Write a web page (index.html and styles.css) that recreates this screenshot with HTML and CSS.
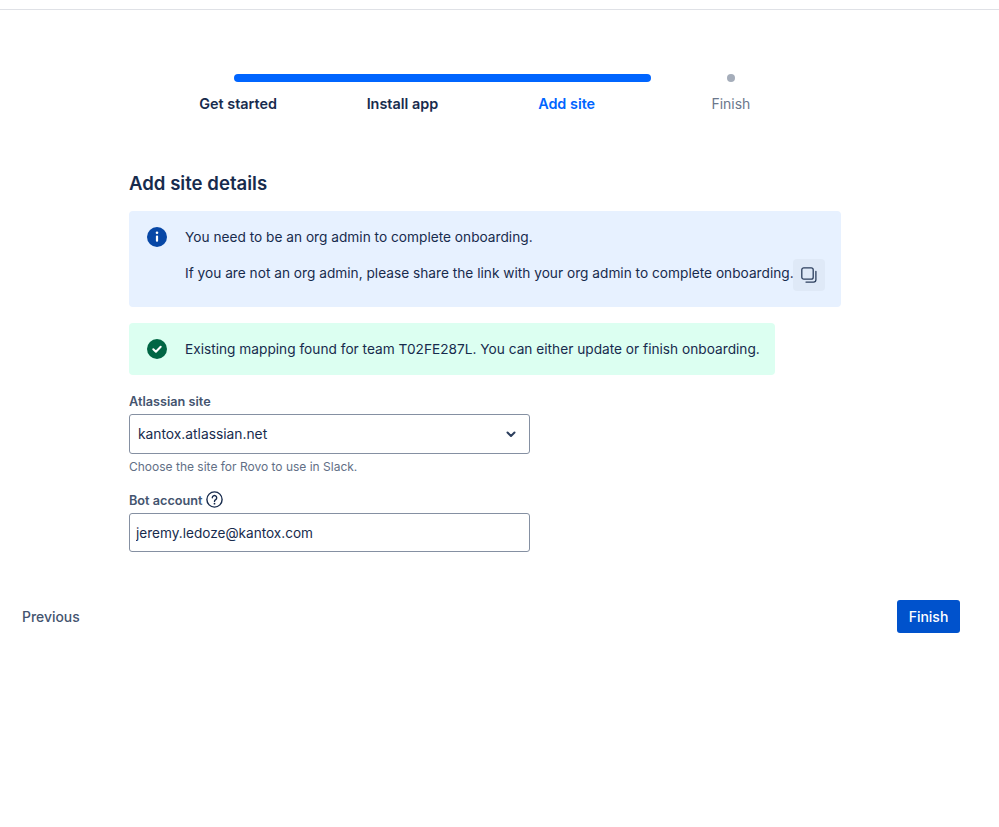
FILE: index.html
```html
<!DOCTYPE html>
<html lang="en">
<head>
    <meta charset="UTF-8">
    <meta name="viewport" content="width=device-width, initial-scale=1.0">
    <title>Add site details</title>
    <link rel="stylesheet" href="styles.css">
</head>
<body>
    <div class="top-line"></div>

    <div class="stepper">
        <div class="track">
            <div class="track-fill"></div>
            <div class="track-dot"></div>
        </div>
        <div class="steps">
            <div class="step step-done">Get started</div>
            <div class="step step-done">Install app</div>
            <div class="step step-current">Add site</div>
            <div class="step step-next">Finish</div>
        </div>
    </div>

    <div class="content">
        <h1 class="title">Add site details</h1>

        <div class="alert alert-info">
            <svg class="alert-icon" width="20" height="20" viewBox="0 0 20 20">
                <circle cx="10" cy="10" r="10" fill="#0747a6"/>
                <circle cx="10" cy="5.8" r="1.3" fill="#fff"/>
                <rect x="8.9" y="8.4" width="2.2" height="6.4" rx="1" fill="#fff"/>
            </svg>
            <div class="alert-body">
                <p class="alert-line">You need to be an org admin to complete onboarding.</p>
                <div class="alert-share">
                    <p class="alert-line share-text">If you are not an org admin, please share the link with your org admin to complete onboarding.</p>
                    <button class="copy-button" aria-label="Copy link">
                        <svg width="16" height="16" viewBox="0 0 16 16" fill="none" stroke="#2c3e5d" stroke-width="1.3">
                            <rect x="0.8" y="0.8" width="11.4" height="11.4" rx="2"/>
                            <path d="M14.9 4.5v8.2a2.4 2.4 0 0 1-2.4 2.4H5" stroke-linecap="round"/>
                        </svg>
                    </button>
                </div>
            </div>
        </div>

        <div class="alert alert-success">
            <svg class="alert-icon" width="20" height="20" viewBox="0 0 20 20">
                <circle cx="10" cy="10" r="10" fill="#006644"/>
                <path d="M6.3 10.2l2.6 2.5 4.8-5" fill="none" stroke="#fff" stroke-width="2" stroke-linecap="round" stroke-linejoin="round"/>
            </svg>
            <div class="alert-body">
                <p class="alert-line">Existing mapping found for team T02FE287L. You can either update or finish onboarding.</p>
            </div>
        </div>

        <div class="field field-site">
            <label class="label">Atlassian site</label>
            <div class="select-box">
                <span>kantox.atlassian.net</span>
                <svg width="10" height="7" viewBox="0 0 10 7" fill="none" stroke="#2c3e5d" stroke-width="2" stroke-linecap="round" stroke-linejoin="round">
                    <path d="M1.5 1.5L5 5l3.5-3.5"/>
                </svg>
            </div>
            <div class="help">Choose the site for Rovo to use in Slack.</div>
        </div>

        <div class="field field-bot">
            <label class="label label-icon">Bot account
                <svg class="help-icon" width="17" height="17" viewBox="0 0 17 17" fill="none">
                    <circle cx="8.5" cy="8.5" r="7.6" stroke="#172b4d" stroke-width="1.4"/>
                    <path d="M6.3 6.7a2.2 2.2 0 1 1 3.4 1.9c-.8.5-1.2 1-1.2 1.8" stroke="#172b4d" stroke-width="1.4" stroke-linecap="round"/>
                    <circle cx="8.5" cy="12.7" r="0.9" fill="#172b4d"/>
                </svg>
            </label>
            <input class="text-input" type="text" value="jeremy.ledoze@kantox.com">
        </div>
    </div>

    <div class="footer">
        <button class="previous-button">Previous</button>
        <button class="finish-button">Finish</button>
    </div>
</body>
</html>
```

FILE: styles.css
```css
* {
    margin: 0;
    padding: 0;
    box-sizing: border-box;
    font-family: Inter, "Liberation Sans", sans-serif;
}

body {
    background-color: #fff;
    color: #172b4d;
    min-height: 100vh;
}

.top-line {
    height: 10px;
    border-bottom: 1px solid #dfe1e6;
}

.stepper {
    margin: 64px 0 0 156px;
    width: 657px;
}

.track {
    display: flex;
    align-items: center;
    justify-content: space-between;
    height: 8px;
    padding: 0 78px;
}

.track-fill {
    width: 417px;
    height: 8px;
    border-radius: 4px;
    background-color: #0065ff;
}

.track-dot {
    width: 8px;
    height: 8px;
    border-radius: 50%;
    background-color: #a5adba;
}

.steps {
    display: grid;
    grid-template-columns: repeat(4, 1fr);
    margin-top: 12px;
}

.step {
    text-align: center;
    font-size: 14.4px;
    line-height: 20px;
    color: #6b778c;
}

.step-next {
    font-size: 14px;
}

.step-done {
    color: #172b4d;
    font-weight: 600;
}

.step-current {
    color: #0065ff;
    font-weight: 600;
}

.content {
    margin: 57px 0 0 129px;
}

.title {
    font-size: 18.6px;
    font-weight: 600;
    line-height: 24px;
    margin-bottom: 16px;
    color: #172b4d;
}

.alert {
    display: flex;
    gap: 18px;
    padding: 16px 16px 16px 18px;
    border-radius: 4px;
    font-size: 13.7px;
    line-height: 20px;
}

.alert-icon {
    flex-shrink: 0;
}

.alert-info {
    width: 712px;
    height: 96px;
    background-color: #e7f1ff;
}

.alert-success {
    width: 646px;
    height: 52px;
    margin-top: 16px;
    background-color: #dcfff1;
}

.alert-share {
    display: flex;
    margin-top: 12px;
}

.alert-line {
    white-space: nowrap;
}

.share-text {
    margin: 4px -1px 0 0;
}

.copy-button {
    display: flex;
    align-items: center;
    justify-content: center;
    width: 32px;
    height: 32px;
    border: none;
    border-radius: 4px;
    background-color: #dfe9f7;
}

.field-site {
    margin-top: 19px;
}

.field-bot {
    margin-top: 18px;
}

.label {
    display: block;
    font-size: 12.7px;
    font-weight: 600;
    line-height: 16px;
    color: #44546f;
    margin-bottom: 4px;
}

.label-icon {
    display: flex;
    align-items: center;
    gap: 3px;
}

.help-icon {
    margin: -4px 0 0;
}

.select-box, .text-input {
    display: flex;
    align-items: center;
    justify-content: space-between;
    width: 401px;
    height: 40px;
    border: 1px solid #8590a2;
    border-radius: 3px;
    background-color: #fff;
    color: #172b4d;
    font-size: 13.8px;
}

.select-box {
    padding: 0 13px 0 8px;
}

.text-input {
    height: 39px;
    padding: 0 6px;
    font-size: 13.6px;
}

.help {
    margin-top: 5px;
    font-size: 12px;
    line-height: 16px;
    color: #626f86;
}

.footer {
    display: flex;
    justify-content: space-between;
    align-items: center;
    margin-top: 48px;
    padding: 0 39px 0 22px;
}

.previous-button {
    border: none;
    background: none;
    color: #44546f;
    font-size: 13.9px;
    font-weight: 500;
}

.finish-button {
    width: 63px;
    height: 33px;
    border: none;
    border-radius: 3px;
    background-color: #0052cc;
    color: #fff;
    font-size: 14px;
    font-weight: 500;
}
```
